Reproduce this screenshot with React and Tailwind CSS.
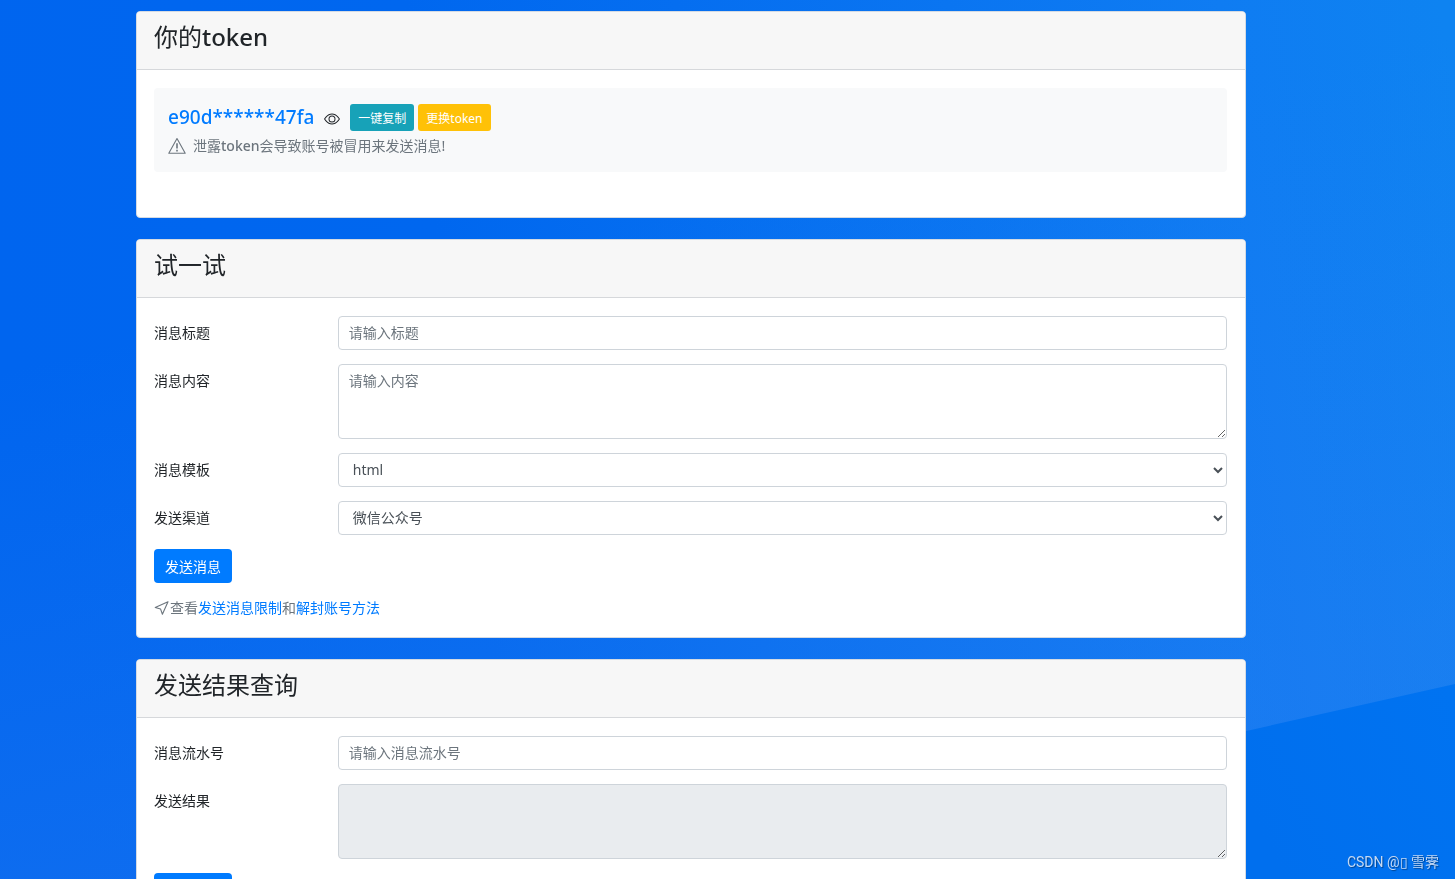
import React, { useState } from 'react';
import { BsEye } from 'react-icons/bs';

const fieldClass = "block w-full border border-[#ced4da] rounded-[4px] bg-white text-[14px] leading-[20px] text-[#495057] placeholder-[#6c757d] placeholder:opacity-100 outline-none focus:border-[#80bdff]";

const Backdrop = () => (
    <svg className="fixed inset-0 w-full h-full -z-10" viewBox="0 0 1455 879" preserveAspectRatio="none" aria-hidden="true">
        <defs>
            <linearGradient id="sky" gradientUnits="userSpaceOnUse" x1="0" y1="300" x2="1455" y2="100">
                <stop offset="0" stopColor="#0065ef" />
                <stop offset="0.3" stopColor="#0067ef" />
                <stop offset="0.85" stopColor="#0f7cf2" />
                <stop offset="1" stopColor="#0e83f1" />
            </linearGradient>
            <linearGradient id="glow" gradientUnits="userSpaceOnUse" x1="300" y1="300" x2="440" y2="900">
                <stop offset="0" stopColor="#2a7cf0" stopOpacity="0" />
                <stop offset="1" stopColor="#2a7cf0" stopOpacity="0.38" />
            </linearGradient>
            <linearGradient id="floor" gradientUnits="userSpaceOnUse" x1="1246" y1="800" x2="1455" y2="700">
                <stop offset="0" stopColor="#006fee" />
                <stop offset="1" stopColor="#0073f1" />
            </linearGradient>
        </defs>
        <rect width="1455" height="879" fill="url(#sky)" />
        <rect width="1455" height="879" fill="url(#glow)" />
        <path d="M588 879L1455 684V879Z" fill="url(#floor)" />
    </svg>
);

const WarningIcon = () => (
    <svg width="18" height="18" viewBox="0 0 18 18" fill="none" stroke="currentColor" strokeWidth="1.1" className="shrink-0">
        <path d="M9 1.6.8 16.3h16.4L9 1.6Z" strokeLinejoin="round" />
        <path d="M9 6.2v5.3M9 12.8v1.7" strokeWidth="1.6" />
    </svg>
);

const SendIcon = () => (
    <svg width="16" height="16" viewBox="0 0 16 16" fill="none" stroke="currentColor" strokeWidth="1.1" className="shrink-0">
        <path d="M14 1.8 1.2 7.4l5.4 1.7 1.8 5.1L14 1.8Z" strokeLinejoin="round" />
    </svg>
);

const Card = ({ title, children }) => (
    <section className="mb-[21px] rounded-[4px] border border-[#d5dbe3] bg-white">
        <header className="h-[58px] px-[17px] pt-[10px] rounded-t-[3px] bg-[#f7f7f7] border-b border-[#d6d8db]">
            <h4 className="text-[24px] leading-[30px]">{title}</h4>
        </header>
        <div className="pl-[17px] pr-[18px] pt-[18px] pb-[19px]">{children}</div>
    </section>
);

const FormRow = ({ id, label, children }) => (
    <div className="flex -mx-[15px] mb-[14px]">
        <label htmlFor={id} className="w-1/6 px-[15px] pt-[7px] leading-[20px]">{label}</label>
        <div className="w-5/6 px-[15px]">{children}</div>
    </div>
);

const App = () => {
    const [visible, setVisible] = useState(false);
    const [form, setForm] = useState({ title: '', content: '', template: 'html', channel: 'wechat' });
    const [serial, setSerial] = useState('');

    const handleChange = (e) => setForm({ ...form, [e.target.name]: e.target.value });

    return (
        <div className="relative isolate h-screen overflow-hidden font-['Noto_Sans','Noto_Sans_CJK_SC',sans-serif] text-[14px] leading-[21px] text-[#212529]">
            <Backdrop />
            <main className="ml-[136px] mr-[209px] pt-[11px]">
                <Card title={<>你的<span className="font-medium">token</span></>}>
                    <div className="mb-[26px] h-[84px] rounded-[4px] bg-[#f8f9fa] px-[14px] pt-[16px]">
                        <div className="flex items-center">
                            <span className="text-[19px] leading-[27px] font-medium text-[#007bff]">e90d******47fa</span>
                            <button type="button" aria-label="显示token" aria-pressed={visible} onClick={() => setVisible(!visible)} className="mx-[10px] pt-[2px]">
                                <BsEye size={16} />
                            </button>
                            <button type="button" className="mr-[4px] h-[27px] rounded-[3px] bg-[#17a2b8] px-[8px] pt-[2px] text-[12px] text-white">一键复制</button>
                            <button type="button" className="h-[27px] rounded-[3px] bg-[#ffc107] px-[8px] pt-[2px] text-[12px] text-white">更换token</button>
                        </div>
                        <p className="mt-[4px] flex items-center gap-[7px] text-[#6c757d]">
                            <WarningIcon />
                            <span>泄露<span className="font-medium">token</span>会导致账号被冒用来发送消息!</span>
                        </p>
                    </div>
                </Card>

                <Card title="试一试">
                    <form onSubmit={(e) => e.preventDefault()}>
                        <FormRow id="title" label="消息标题">
                            <input id="title" name="title" type="text" placeholder="请输入标题" value={form.title} onChange={handleChange} className={`${fieldClass} h-[34px] px-[10px] pb-[2px]`} />
                        </FormRow>
                        <FormRow id="content" label="消息内容">
                            <textarea id="content" name="content" placeholder="请输入内容" value={form.content} onChange={handleChange} className={`${fieldClass} h-[75px] px-[10px] py-[6px]`} />
                        </FormRow>
                        <FormRow id="template" label="消息模板">
                            <select id="template" name="template" value={form.template} onChange={handleChange} className={`${fieldClass} h-[34px] px-[10px] pb-[2px]`}>
                                <option value="html">html</option>
                                <option value="json">json</option>
                            </select>
                        </FormRow>
                        <FormRow id="channel" label="发送渠道">
                            <select id="channel" name="channel" value={form.channel} onChange={handleChange} className={`${fieldClass} h-[34px] px-[10px] pb-[2px]`}>
                                <option value="wechat">微信公众号</option>
                            </select>
                        </FormRow>
                        <button type="submit" className="block h-[34px] rounded-[4px] bg-[#007bff] px-[11px] text-white">发送消息</button>
                    </form>
                    <p className="mt-[14px] flex items-center text-[#6c757d]">
                        <SendIcon />
                        查看<a href="#limit" className="text-[#007bff]">发送消息限制</a>和<a href="#unblock" className="text-[#007bff]">解封账号方法</a>
                    </p>
                </Card>

                <Card title="发送结果查询">
                    <form onSubmit={(e) => e.preventDefault()}>
                        <FormRow id="serial" label="消息流水号">
                            <input id="serial" type="text" placeholder="请输入消息流水号" value={serial} onChange={(e) => setSerial(e.target.value)} className={`${fieldClass} h-[34px] px-[10px] pb-[2px]`} />
                        </FormRow>
                        <FormRow id="result" label="发送结果">
                            <textarea id="result" readOnly className="block h-[75px] w-full rounded-[4px] border border-[#ced4da] bg-[#e9ecef] px-[10px] py-[6px] outline-none" />
                        </FormRow>
                        <button type="submit" className="block h-[34px] rounded-[4px] bg-[#007bff] px-[11px] text-white">查询结果</button>
                    </form>
                </Card>
            </main>
            <div className="absolute bottom-[6px] right-[16px] font-['Roboto','Noto_Sans_CJK_SC',sans-serif] text-[14px] text-[#c3d9f5] [text-shadow:1px_1px_1px_#00000066]">CSDN @▯ 雪霁</div>
        </div>
    );
};

export default App;
